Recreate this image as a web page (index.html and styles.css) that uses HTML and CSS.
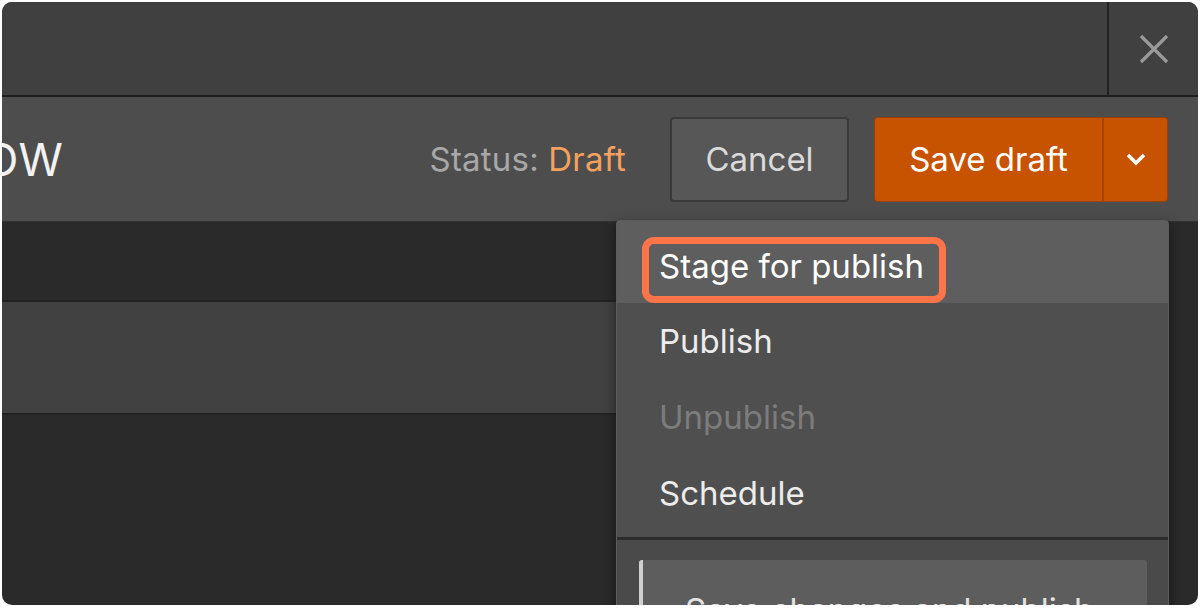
FILE: index.html
```html
<!DOCTYPE html>
<html lang="en">
<head>
    <meta charset="UTF-8">
    <meta name="viewport" content="width=device-width, initial-scale=1.0">
    <title>Save draft</title>
    <link rel="stylesheet" href="styles.css">
</head>
<body>

    <!-- Ventana del editor -->
    <div class="window">
        <!-- Barra superior con botón de cierre -->
        <div class="topbar">
            <button class="close-btn" aria-label="Close">
                <svg width="30" height="30" viewBox="0 0 30 30">
                    <path d="M2 2 L28 28 M28 2 L2 28" stroke="#9a9a9a" stroke-width="3.2" fill="none"/>
                </svg>
            </button>
        </div>

        <!-- Cabecera con título, estado y acciones -->
        <div class="header">
            <h1 class="title">OW</h1>
            <div class="status">Status: <span class="draft">Draft</span></div>
            <button class="btn cancel">Cancel</button>

            <div class="split">
                <button class="btn save">Save draft</button>
                <button class="btn toggle" aria-label="More">
                    <svg width="22" height="14" viewBox="0 0 22 14">
                        <polyline points="3,3 11,11 19,3" stroke="#fff" stroke-width="3.6" fill="none"/>
                    </svg>
                </button>

                <!-- Menú desplegable -->
                <div class="menu">
                    <ul class="menu-list">
                        <li class="menu-item active"><span class="mark">Stage for publish</span></li>
                        <li class="menu-item">Publish</li>
                        <li class="menu-item disabled">Unpublish</li>
                        <li class="menu-item">Schedule</li>
                    </ul>
                    <div class="menu-footer">
                        <button class="footer-btn">Save changes and publish</button>
                    </div>
                </div>
            </div>
        </div>

        <!-- Contenido -->
        <div class="content">
            <div class="band"></div>
        </div>
    </div>

</body>
</html>
```

FILE: styles.css
```css
/* Estilos generales */
body {
    margin: 0;
    padding: 2px;
    background: #fff;
    font-family: 'Inter', 'Roboto', sans-serif;
}

/* Ventana principal */
.window {
    width: 1196px;
    height: 603px;
    border-radius: 10px;
    overflow: hidden;
    background: #2a2a2a;
    display: flex;
    flex-direction: column;
}

/* Barra superior */
.topbar {
    height: 93px;
    background: #404040;
    border-bottom: 2px solid #1e1e1e;
    display: flex;
    justify-content: flex-end;
    flex-shrink: 0;
}

.close-btn {
    width: 91px;
    border: none;
    border-left: 2px solid #222;
    background: transparent;
    display: flex;
    align-items: center;
    justify-content: center;
    padding: 0;
}

/* Cabecera */
.header {
    height: 124px;
    background: #4d4d4d;
    border-bottom: 1px solid #333;
    display: flex;
    align-items: center;
    padding-right: 30px;
    flex-shrink: 0;
}

.title {
    flex: 1;
    margin: 0 0 0 -18px;
    font-size: 45px;
    font-weight: 400;
    color: #f2f2f2;
    white-space: nowrap;
}

.status {
    font-size: 33px;
    letter-spacing: 0.2px;
    color: #a8a8a8;
    margin-right: 44px;
}

.draft {
    color: #f5a15d;
}

/* Botones */
.btn {
    font-family: inherit;
    font-size: 33px;
    height: 85px;
    border-radius: 4px;
    cursor: pointer;
}

.cancel {
    width: 179px;
    background: #575757;
    color: #dadada;
    border: 2px solid #3a3a3a;
    margin-right: 25px;
}

.split {
    position: relative;
    display: flex;
}

.save {
    width: 230px;
    background: #c75300;
    color: #fff;
    border: 1px solid #9a4000;
    border-right: 2px solid #a64500;
    border-radius: 4px 0 0 4px;
}

.toggle {
    width: 64px;
    background: #c75300;
    border: 1px solid #9a4000;
    border-left: none;
    border-radius: 0 4px 4px 0;
    display: flex;
    align-items: center;
    justify-content: center;
    padding: 0;
}

/* Menú desplegable */
.menu {
    position: absolute;
    top: calc(100% + 18px);
    right: -1px;
    width: 551px;
    background: #4f4f4f;
    border: 1px solid #5c5c5c;
    border-radius: 4px;
    box-shadow: 0 4px 12px rgba(0, 0, 0, 0.5);
    z-index: 10;
}

.menu-list {
    list-style: none;
    margin: 0;
    padding: 0 0 6px;
    border-bottom: 3px solid #2c2c2c;
}

.menu-item {
    height: 76px;
    display: flex;
    align-items: center;
    padding-left: 42px;
    font-size: 33px;
    color: #ececec;
}

.menu-item.active {
    height: 76px;
    padding-top: 6px;
    background: #5e5e5e;
    align-items: flex-end;
}

.menu-item.disabled {
    color: #7c7c7c;
}

/* Marco naranja alrededor de la opción */
.mark {
    display: inline-block;
    border: 7px solid #ff7448;
    border-radius: 12px;
    line-height: 45px;
    padding: 0 15px 7px 10px;
    margin-left: -17px;
    color: #fff;
}

.menu-footer {
    background: #4a4a4a;
    padding: 20px 21px 20px 22px;
}

.footer-btn {
    width: 100%;
    height: 80px;
    text-align: left;
    font-family: inherit;
    font-size: 33px;
    line-height: 40px;
    color: #e2e2e2;
    background: #5d5d5d;
    border: none;
    border-left: 4px solid #d0d0d0;
    border-radius: 3px;
    padding: 20px 0 0 42px;
    display: block;
}

/* Contenido */
.content {
    flex: 1;
    padding: 78px 30px 0 0;
}

.band {
    height: 111px;
    background: #414141;
    border-top: 2px solid #222;
    border-bottom: 2px solid #222;
}
```
